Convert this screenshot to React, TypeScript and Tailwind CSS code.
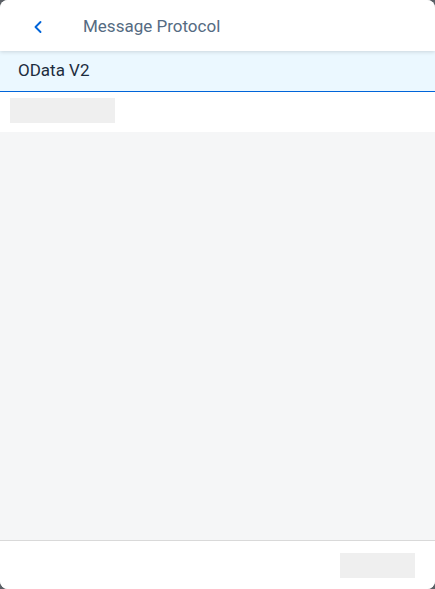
import { ChevronLeft } from "lucide-react";

function Skeleton({ className }: { className: string }) {
  return <div className={`bg-[#efefef] ${className}`} />;
}

export default function App() {
  return (
    <div className="h-[589px] w-[435px] bg-[#5b6066] font-['Roboto','Liberation_Sans',sans-serif]">
      <div className="flex h-full flex-col overflow-hidden rounded-lg bg-white">
        <header className="relative z-10 flex h-[51px] shrink-0 items-center bg-white pt-[2px] shadow-[0_1px_4px_rgba(0,0,0,0.14)]">
          <button className="ml-[27px] flex h-[22px] w-[22px] items-center justify-center text-[#0064d9]">
            <ChevronLeft size={20} strokeWidth={2.3} />
          </button>
          <h1 className="ml-[34px] text-[17px] leading-none text-[#556b82]">
            Message Protocol
          </h1>
        </header>

        <div className="flex h-[41px] shrink-0 items-center border-b border-[#0064d9] bg-[#ebf8ff] pl-[18px] text-[17px] text-[#1d2d3e]">
          OData V2
        </div>

        <div className="flex h-[40px] shrink-0 items-start bg-white pl-[10px] pt-[6px]">
          <Skeleton className="h-[25px] w-[105px]" />
        </div>

        <main className="flex-1 bg-[#f5f6f7]" />

        <footer className="flex h-[49px] shrink-0 items-center justify-end border-t border-[#d9d9d9] bg-white pr-[20px]">
          <Skeleton className="h-[25px] w-[75px]" />
        </footer>
      </div>
    </div>
  );
}
